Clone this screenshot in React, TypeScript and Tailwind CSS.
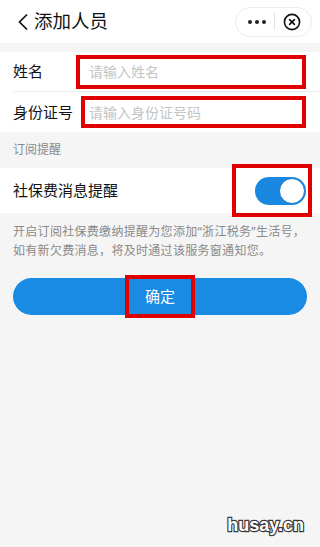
import { useState } from "react";

const FONT = { fontFamily: '"Noto Sans", "Noto Sans CJK SC", sans-serif' };

function Capsule() {
  return (
    <div className="flex h-[30px] w-[77px] items-center rounded-full border border-[#ececec] bg-white">
      <div className="flex flex-1 items-center justify-center gap-[3px] pl-1">
        <span className="h-[4px] w-[4px] rounded-full bg-[#222]" />
        <span className="h-[4px] w-[4px] rounded-full bg-[#222]" />
        <span className="h-[4px] w-[4px] rounded-full bg-[#222]" />
      </div>
      <span className="h-[17px] w-px bg-[#e2e2e2]" />
      <div className="flex flex-1 items-center justify-center pr-[2px]">
        <svg width="18" height="18" viewBox="0 0 18 18" fill="none" stroke="#111" strokeWidth="1.6">
          <circle cx="9" cy="9" r="7.6" />
          <path d="M6.6 6.6l4.8 4.8M11.4 6.6l-4.8 4.8" strokeLinecap="round" />
        </svg>
      </div>
    </div>
  );
}

function Toggle({ on, onClick }: { on: boolean; onClick: () => void }) {
  return (
    <button
      onClick={onClick}
      className={`flex h-[28px] w-[51px] items-center rounded-full p-[1px] ${
        on ? "justify-end bg-[#1a87e0]" : "justify-start bg-[#e5e5e5]"
      }`}
    >
      <span className="h-[26px] w-[26px] rounded-full border border-[#1a78c8] bg-white" />
    </button>
  );
}

export default function App() {
  const [on, setOn] = useState(true);

  return (
    <div className="relative h-[547px] w-[320px] overflow-hidden bg-[#f5f5f5] text-[#111]" style={FONT}>
      {/* 顶部导航 */}
      <header className="flex h-[43px] items-center justify-between bg-white pl-[17px] pr-[8px]">
        <div className="flex items-center gap-[5px]">
          <svg width="12" height="18" viewBox="0 0 12 18" fill="none" stroke="#111" strokeWidth="1.7">
            <path d="M10 1.5L2.5 9l7.5 7.5" />
          </svg>
          <span className="text-[18.5px] leading-none">添加人员</span>
        </div>
        <Capsule />
      </header>

      {/* 表单 */}
      <section className="mt-[9px] bg-white">
        <div className="ml-[13px] flex h-[40px] items-center border-b border-[#ececec]">
          <span className="w-[64px] text-[15px]">姓名</span>
          <div className="-ml-[1px] mr-[14px] flex h-[34px] flex-1 items-center border-[4px] border-[#e00000] pl-[9px]">
            <span className="text-[14px] text-[#c4c4c4]">请输入姓名</span>
          </div>
        </div>
        <div className="ml-[13px] flex h-[40px] items-center">
          <span className="w-[68px] text-[15px]">身份证号</span>
          <div className="mr-[14px] flex h-[32px] flex-1 items-center border-[4px] border-[#e00000] pl-[4px]">
            <span className="text-[14px] text-[#c4c4c4]">请输入身份证号码</span>
          </div>
        </div>
      </section>

      <div className="flex h-[36px] items-center px-[13px] text-[12px] text-[#8a8a8a]">订阅提醒</div>

      <section className="flex h-[45px] items-center justify-between bg-white pl-[13px] pr-[8px]">
        <span className="text-[15px]">社保费消息提醒</span>
        <div className="flex h-[53px] w-[80px] items-center justify-end border-[4px] border-[#e00000] pr-[2px]">
          <Toggle on={on} onClick={() => setOn(!on)} />
        </div>
      </section>

      <p className="px-[13px] pt-[9px] text-[12px] leading-[19px] tracking-[0.3px] text-[#8a8a8a]">
        开启订阅社保费缴纳提醒为您添加“浙江税务”生活号，如有新欠费消息，将及时通过该服务窗通知您。
      </p>

      <div className="px-[13px] pt-[18px]">
        <button className="flex h-[37px] w-full items-center justify-center rounded-full bg-[#1a8be3]">
          <span className="flex h-[43px] w-[70px] items-center justify-center border-[4px] border-[#e00000] text-[15px] text-white">
            确定
          </span>
        </button>
      </div>

      <span
        className="absolute bottom-[8px] right-[16px] text-[18px] font-bold text-white"
        style={{
          fontFamily: '"Liberation Sans", sans-serif',
          WebkitTextStroke: "2.4px #3a3a3a",
          paintOrder: "stroke fill",
        }}
      >
        husay.cn
      </span>
    </div>
  );
}
